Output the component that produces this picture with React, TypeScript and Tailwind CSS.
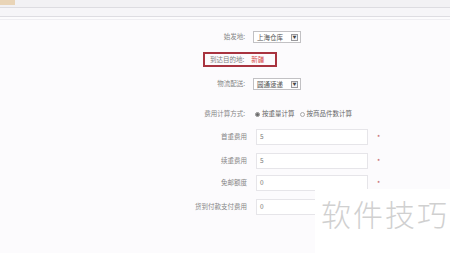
const font = { fontFamily: '"Noto Sans CJK SC", "Noto Sans", sans-serif' };

function Select({ value }: { value: string }) {
  return (
    <div className="flex h-[12px] w-[48px] items-center justify-between border border-[#c2c1c4] bg-white pl-[3px] pr-[2px]">
      <span className="text-[6.5px] leading-none text-[#555]">{value}</span>
      <span className="flex h-[7px] w-[7px] items-center justify-center border border-[#9a999d] bg-[#f4f4f4] text-[4px] leading-none text-[#444]">
        ▼
      </span>
    </div>
  );
}

function Field({ label, value, required }: { label: string; value: string; required?: boolean }) {
  return (
    <div className="flex h-[16px] items-center">
      <div className="w-[247px] shrink-0 text-right text-[6.5px] text-[#858585]">{label}</div>
      <div className="ml-[9px] flex h-[16px] w-[112px] items-center border border-[#e6e5e9] bg-white pl-[3px] text-[6.5px] text-[#777]">
        {value}
      </div>
      {required && <span className="ml-[9px] text-[7px] text-[#c05a5a]">*</span>}
    </div>
  );
}

export default function App() {
  const label = "w-[245px] shrink-0 text-right text-[6.5px] text-[#858585]";
  return (
    <div className="relative h-[253px] w-[450px] overflow-hidden bg-[#fcfbfd]" style={font}>
      {/* top bars */}
      <div className="relative h-[8px] border-b border-[#dddce1] bg-[#f2f1f4]">
        <div className="absolute left-0 top-0 h-[5px] w-[15px] bg-[#e6cda8] opacity-80" />
      </div>
      <div className="h-[9px] border-b border-[#dedde2] bg-[#f6f5f8]" />
      <div className="h-[3px] border-b border-[#efeef2]" />

      <div className="mt-[11px] flex items-center">
        <div className={label}>始发地:</div>
        <div className="ml-[8px]">
          <Select value="上海仓库" />
        </div>
      </div>

      <div className="mt-[9px] pl-[203px]">
        <div className="flex h-[15px] w-[74px] items-center border-2 border-[#a8333f] pl-[5px]">
          <span className="text-[6.5px] text-[#808080]">到达目的地:</span>
          <span className="ml-[7px] text-[6.5px] text-[#d8484c]">新疆</span>
        </div>
      </div>

      <div className="mt-[11px] flex items-center">
        <div className={label}>物流配送:</div>
        <div className="ml-[8px]">
          <Select value="圆通速递" />
        </div>
      </div>

      <div className="mt-[19px] flex h-[10px] items-center">
        <div className={label}>费用计算方式:</div>
        <div className="ml-[10px] flex items-center text-[6.5px] text-[#666]">
          <span className="flex h-[5px] w-[5px] items-center justify-center rounded-full border border-[#888]">
            <span className="h-[3px] w-[3px] rounded-full bg-[#666]" />
          </span>
          <span className="ml-[2px]">按重量计算</span>
          <span className="ml-[5px] h-[5px] w-[5px] rounded-full border border-[#aaa]" />
          <span className="ml-[2px]">按商品件数计算</span>
        </div>
      </div>

      <div className="mt-[10px] flex flex-col gap-[8px]">
        <Field label="首重费用" value="5" required />
        <Field label="续重费用" value="5" required />
        <div className="-mt-[2px]">
          <Field label="免邮额度" value="0" required />
        </div>
        <Field label="货到付款支付费用" value="0" />
      </div>

      {/* watermark */}
      <div className="absolute left-[315px] top-[189px] flex h-[64px] w-[135px] items-start bg-white pl-[6px] pt-[7px]">
        <span className="text-[30px] font-light leading-[34px] tracking-[2px] text-[#d0d0d0]">软件技巧</span>
      </div>
    </div>
  );
}
